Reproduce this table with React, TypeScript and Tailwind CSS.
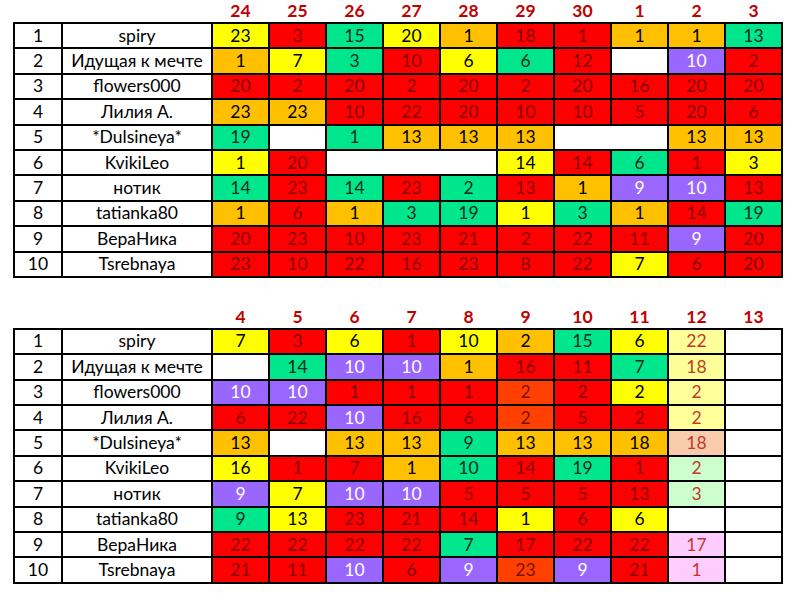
import React from 'react';

type Cell = [string, string] | [string, string, number];

const tones: Record<string, string> = {
  y: 'bg-[#ffff00] text-black',
  o: 'bg-[#ffc000] text-black',
  r: 'bg-[#ff0000] text-[#860000]',
  x: 'bg-[#ff4000] text-[#7a1200]',
  g: 'bg-[#00e68c] text-[#0d2a1c]',
  p: 'bg-[#9966ff] text-white',
  w: 'bg-white text-black',
  ly: 'bg-[#ffff99] text-[#c0392b]',
  pe: 'bg-[#f8cbad] text-[#c0392b]',
  lg: 'bg-[#ccffcc] text-[#c0392b]',
  pk: 'bg-[#ffccff] text-[#c0392b]',
};

const names = [
  'spiry',
  'Идущая к мечте',
  'flowers000',
  'Лилия А.',
  '*Dulsineya*',
  'KvikiLeo',
  'нотик',
  'tatianka80',
  'ВераНика',
  'Tsrebnaya',
];

const topDays = ['24', '25', '26', '27', '28', '29', '30', '1', '2', '3'];
const bottomDays = ['4', '5', '6', '7', '8', '9', '10', '11', '12', '13'];

const topRows: Cell[][] = [
  [['23', 'y'], ['3', 'r'], ['15', 'g'], ['20', 'y'], ['1', 'o'], ['18', 'r'], ['1', 'r'], ['1', 'o'], ['1', 'o'], ['13', 'g']],
  [['1', 'o'], ['7', 'y'], ['3', 'g'], ['10', 'r'], ['6', 'y'], ['6', 'g'], ['12', 'r'], ['', 'w'], ['10', 'p'], ['2', 'r']],
  [['20', 'r'], ['2', 'r'], ['20', 'r'], ['2', 'r'], ['20', 'r'], ['2', 'r'], ['20', 'r'], ['16', 'r'], ['20', 'r'], ['20', 'r']],
  [['23', 'o'], ['23', 'o'], ['10', 'r'], ['22', 'r'], ['20', 'r'], ['10', 'r'], ['10', 'r'], ['5', 'r'], ['20', 'r'], ['6', 'r']],
  [['19', 'g'], ['', 'w'], ['1', 'g'], ['13', 'o'], ['13', 'o'], ['13', 'o'], ['', 'w', 2], ['13', 'o'], ['13', 'o']],
  [['1', 'y'], ['20', 'r'], ['', 'w', 3], ['14', 'y'], ['14', 'r'], ['6', 'g'], ['1', 'r'], ['3', 'y']],
  [['14', 'g'], ['23', 'r'], ['14', 'g'], ['23', 'r'], ['2', 'g'], ['13', 'r'], ['1', 'o'], ['9', 'p'], ['10', 'p'], ['13', 'r']],
  [['1', 'o'], ['6', 'r'], ['1', 'o'], ['3', 'g'], ['19', 'g'], ['1', 'y'], ['3', 'g'], ['1', 'o'], ['14', 'r'], ['19', 'g']],
  [['20', 'r'], ['23', 'r'], ['10', 'r'], ['23', 'r'], ['21', 'r'], ['2', 'r'], ['22', 'r'], ['11', 'r'], ['9', 'p'], ['20', 'r']],
  [['23', 'r'], ['10', 'r'], ['22', 'r'], ['16', 'r'], ['23', 'r'], ['8', 'r'], ['22', 'r'], ['7', 'y'], ['6', 'r'], ['20', 'r']],
];

const bottomRows: Cell[][] = [
  [['7', 'y'], ['3', 'r'], ['6', 'y'], ['1', 'r'], ['10', 'y'], ['2', 'o'], ['15', 'g'], ['6', 'y'], ['22', 'ly'], ['', 'w']],
  [['', 'w'], ['14', 'g'], ['10', 'p'], ['10', 'p'], ['1', 'o'], ['16', 'r'], ['11', 'r'], ['7', 'g'], ['18', 'ly'], ['', 'w']],
  [['10', 'p'], ['10', 'p'], ['1', 'r'], ['1', 'r'], ['1', 'r'], ['2', 'x'], ['2', 'r'], ['2', 'y'], ['2', 'ly'], ['', 'w']],
  [['6', 'r'], ['22', 'r'], ['10', 'p'], ['16', 'r'], ['6', 'r'], ['2', 'x'], ['5', 'r'], ['2', 'r'], ['2', 'ly'], ['', 'w']],
  [['13', 'o'], ['', 'w'], ['13', 'o'], ['13', 'o'], ['9', 'g'], ['13', 'o'], ['13', 'o'], ['18', 'o'], ['18', 'pe'], ['', 'w']],
  [['16', 'y'], ['1', 'r'], ['7', 'r'], ['1', 'o'], ['10', 'g'], ['14', 'r'], ['19', 'g'], ['1', 'r'], ['2', 'lg'], ['', 'w']],
  [['9', 'p'], ['7', 'y'], ['10', 'p'], ['10', 'p'], ['5', 'r'], ['5', 'r'], ['5', 'r'], ['13', 'r'], ['3', 'lg'], ['', 'w']],
  [['9', 'g'], ['13', 'y'], ['23', 'r'], ['21', 'r'], ['14', 'r'], ['1', 'y'], ['6', 'r'], ['6', 'y'], ['', 'w'], ['', 'w']],
  [['22', 'r'], ['22', 'r'], ['22', 'r'], ['22', 'r'], ['7', 'g'], ['17', 'r'], ['22', 'r'], ['22', 'r'], ['17', 'pk'], ['', 'w']],
  [['21', 'r'], ['11', 'r'], ['10', 'p'], ['6', 'r'], ['9', 'p'], ['23', 'x'], ['9', 'p'], ['21', 'r'], ['1', 'pk'], ['', 'w']],
];

const spanClass: Record<number, string> = {
  1: '',
  2: 'col-span-2',
  3: 'col-span-3',
};

function ScoreTable({ days, rows }: { days: string[]; rows: Cell[][] }) {
  return (
    <div>
      {/* day numbers above the table */}
      <div className="grid grid-cols-[46px_148px_repeat(10,55px)] gap-x-[2px] px-[2px] h-[22px] items-center">
        <div />
        <div />
        {days.map((d) => (
          <div key={d} className="text-center text-[17.5px] font-bold text-[#c00000] leading-none">
            {d}
          </div>
        ))}
      </div>

      <div className="grid grid-cols-[46px_148px_repeat(10,55px)] auto-rows-[23.4px] gap-[2px] p-[2px] bg-black w-fit">
        {rows.map((cells, i) => (
          <React.Fragment key={i}>
            <div className="bg-white flex items-center justify-center">{i + 1}</div>
            <div className="bg-white flex items-center justify-center">{names[i]}</div>
            {cells.map(([v, tone, span = 1], j) => (
              <div
                key={j}
                className={`flex items-center justify-center ${tones[tone]} ${spanClass[span]}`}
              >
                {v}
              </div>
            ))}
          </React.Fragment>
        ))}
      </div>
    </div>
  );
}

export default function App() {
  return (
    <div className="w-[800px] h-[602px] bg-white font-['Lato',sans-serif] text-[17.5px] text-black overflow-hidden">
      <div className="pl-[13px]">
        <ScoreTable days={topDays} rows={topRows} />
        <div className="h-[28px]" />
        <ScoreTable days={bottomDays} rows={bottomRows} />
      </div>
    </div>
  );
}
